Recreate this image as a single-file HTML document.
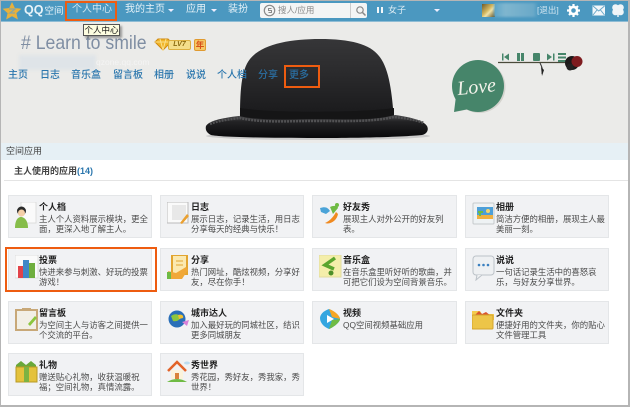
<!DOCTYPE html>
<html><head><meta charset="utf-8">
<style>
*{margin:0;padding:0;box-sizing:border-box}
html,body{width:630px;height:407px;overflow:hidden;background:#fff}
body{font-family:"Liberation Sans","Noto Sans CJK SC",sans-serif;position:relative;filter:blur(.25px)}
.a{position:absolute;white-space:nowrap}
.nav{color:#e6f2f8;font-size:10px;line-height:14px;top:3px}
.m{color:#2a76ad;font-size:10px;line-height:13px;top:69px;font-weight:500}
.card{position:absolute;width:144px;height:43px;background:#f1f2f4;border:1px solid #e4e6e8}
.card b{position:absolute;left:30px;top:5px;font-size:9px;line-height:12px;color:#222;white-space:nowrap}
.card p{position:absolute;left:30px;top:18px;width:112px;font-size:8.4px;line-height:10px;color:#4a4a4a;white-space:nowrap}
.card svg{position:absolute;left:6px;top:6px}
</style></head><body>
<div class="a" style="left:0;top:0;width:630px;height:407px;border:1px solid #b5b5b5;border-width:1px 2px 2px 1px;z-index:9;pointer-events:none"></div>

<!-- top bar -->
<div class="a" style="left:1px;top:1px;width:628px;height:20px;background:#4b98c0"></div>
<div class="a" style="left:0;top:21px;width:630px;height:1px;background:#8fbcd4"></div>
<svg class="a" style="left:2px;top:1px" width="20" height="19"><path d="M10 1l2.800 6 6.600.7-5 4.400 1.500 6.400L10 15.200l-5.900 3.300 1.500-6.400-5-4.400 6.600-.7z" fill="#e8b13c"/><path d="M7 8h6l-5 4h5" stroke="#8aa6a0" stroke-width="1.300" fill="none"/></svg>
<div class="a" style="left:24px;top:3px;color:#e8f3f8;font-size:12px;line-height:14px"><span style="font-size:12.500px;font-weight:bold">QQ</span><span style="font-size:9.500px;margin-left:1px">空间</span></div>
<div class="a nav" style="left:72px;color:#cfe5f0">个人中心</div>
<div class="a nav" style="left:125px">我的主页</div>
<div class="a" style="left:168px;top:9px;border:3px solid transparent;border-top:3px solid #eef;border-bottom:0"></div>
<div class="a nav" style="left:186px">应用</div>
<div class="a" style="left:211px;top:9px;border:3px solid transparent;border-top:3px solid #eef;border-bottom:0"></div>
<div class="a nav" style="left:228px">装扮</div>
<div class="a" style="left:260px;top:3px;width:107px;height:15px;background:#f4f5f5;border-radius:2px"></div>
<div class="a" style="left:350px;top:3px;width:1px;height:15px;background:#ccc"></div>
<svg class="a" style="left:263px;top:4px" width="13" height="13"><circle cx="6.500" cy="6.500" r="5.200" fill="none" stroke="#8a8a8a" stroke-width="1.200"/><path d="M8.500 4.500h-3l0 2h3v2h-3" stroke="#8a8a8a" fill="none"/></svg>
<div class="a" style="left:278px;top:4px;color:#8a8a8a;font-size:8.500px;line-height:13px">搜人/应用</div>
<svg class="a" style="left:355px;top:5px" width="12" height="12"><circle cx="5" cy="5" r="3.200" fill="none" stroke="#888" stroke-width="1.200"/><path d="M7.500 7.500l3 3" stroke="#888" stroke-width="1.500"/></svg>
<div class="a" style="left:377px;top:7px;width:2px;height:6px;background:#f2f7fa;box-shadow:4px 0 0 #f2f7fa"></div>
<div class="a" style="left:388px;top:4px;color:#dcecf4;font-size:9px;line-height:13px">女子</div>
<div class="a" style="left:434px;top:9px;border:3px solid transparent;border-top:3px solid #eef;border-bottom:0"></div>
<div class="a" style="left:482px;top:4px;width:13px;height:13px;background:linear-gradient(135deg,#6d5a2c,#d4b860 45%,#f0e2a8 60%,#5a4a20)"></div>
<div class="a" style="left:494px;top:3px;width:44px;height:14px;background:linear-gradient(90deg,#5da5c8,#7fb6cf 25%,#6aa9c8 90%,#4b98c0);filter:blur(1px)"></div>
<div class="a" style="left:537px;top:4px;color:#d5e8f2;font-size:8.500px;line-height:13px">[退出]</div>
<svg class="a" style="left:566px;top:3px" width="15" height="15"><circle cx="7.500" cy="7.500" r="3.600" fill="none" stroke="#fff" stroke-width="2.600"/><path d="M7.500 1v2.500M7.500 11.500V14M1 7.500h2.500M11.500 7.500H14M3 3l1.800 1.800M10.200 10.200L12 12M12 3l-1.800 1.800M4.800 10.200L3 12" stroke="#fff" stroke-width="2.200"/></svg>
<svg class="a" style="left:592px;top:5px" width="14" height="11"><rect x=".5" y=".5" width="12.500" height="10" fill="#f2f7fa"/><path d="M1 1l5.700 5L12.500 1M1 10l4-5M12.500 10l-4-5" stroke="#6aa8c8" fill="none"/></svg>
<svg class="a" style="left:611px;top:3px" width="14" height="15"><circle cx="4.500" cy="4.500" r="3.300" fill="#f0f5f8"/><circle cx="9.500" cy="4.500" r="3.300" fill="#f0f5f8"/><circle cx="4.500" cy="9" r="3.300" fill="#f0f5f8"/><circle cx="9.500" cy="9" r="3.300" fill="#f0f5f8"/><path d="M7 9v5" stroke="#f0f5f8" stroke-width="1.500"/></svg>

<!-- banner -->
<div class="a" style="left:1px;top:22px;width:628px;height:121px;background:#ebebe9"></div>
<div class="a" style="left:21px;top:31px;color:#7f8ea3;font-size:19.500px;line-height:24px;transform-origin:0 0;transform:scaleX(.905)">#&nbsp;Learn to smile</div>
<svg class="a" style="left:154px;top:38px" width="19" height="13"><path d="M1 4l3-3h10l3 3-8 8z" fill="#f0b52a" stroke="#d08a10"/><path d="M1 4h16M6 1l3 11 3-11" stroke="#fbe08a" fill="none"/></svg>
<div class="a" style="left:168px;top:40px;width:23px;height:10px;background:#f4de8a;border:1px solid #dcb040;border-radius:2px;color:#8a6a10;font-size:7px;line-height:8px;font-weight:bold;text-align:center;font-style:italic">LV7</div>
<div class="a" style="left:194px;top:39px;width:12px;height:12px;background:#f5c966;border:1px solid #e09a30;border-radius:2px;color:#d8501a;font-size:8.500px;line-height:10px;text-align:center;font-weight:bold">年</div>
<div class="a" style="left:19px;top:55px;width:77px;height:15px;background:#dfe4e8;filter:blur(1.500px)"></div>
<div class="a" style="left:96px;top:57px;color:#f4f4f4;font-size:8.500px;line-height:11px">qzone.qq.com</div>

<!-- hat -->
<svg class="a" style="left:190px;top:30px" width="260" height="113">
<defs>
<linearGradient id="c" x1="0" y1="0" x2="0" y2="1"><stop offset="0" stop-color="#363638"/><stop offset=".4" stop-color="#2b2b2d"/><stop offset="1" stop-color="#18181a"/></linearGradient>
<linearGradient id="k" x1="0" y1="0" x2="0" y2="1"><stop offset="0" stop-color="#4a4a4c"/><stop offset=".3" stop-color="#222224"/><stop offset="1" stop-color="#08080a"/></linearGradient>
</defs>
<ellipse cx="128" cy="106" rx="112" ry="4" fill="#bdbdbd" opacity=".7"/>
<path d="M50 90C50 62 51 40 60 29 72 14 100 9 130 9c30 0 50 5 59 17 10 12 13 36 15 64z" fill="url(#c)"/>
<path d="M50 78c30 5 120 5 154 0v14H50z" fill="#151516"/>
<path d="M16 96c3-5 15-8 33-10 22 5 46 3 76 3s58 2 80-4c16 2 29 6 32 11 2 4 0 8-5 9-10 1-40 3-105 3-55 0-98-1-106-3-4-2-6-5-5-9z" fill="url(#k)"/>
<path d="M20 94c10-4 22-5 30-6 22 5 46 3 76 3s56 1 78-4c12 1 22 3 30 6" fill="none" stroke="#525254" stroke-width="2.500" stroke-dasharray="2 1"/>
</svg>

<!-- menu -->
<div class="a m" style="left:8px">主页</div>
<div class="a m" style="left:40px">日志</div>
<div class="a m" style="left:71px">音乐盒</div>
<div class="a m" style="left:113px">留言板</div>
<div class="a m" style="left:154px">相册</div>
<div class="a m" style="left:186px">说说</div>
<div class="a m" style="left:217px">个人档</div>
<div class="a m" style="left:258px;color:#2a6fa3">分享</div>
<div class="a m" style="left:289px;color:#2a6fa3">更多</div>

<!-- love & rose -->
<svg class="a" style="left:448px;top:50px" width="140" height="70">
<circle cx="31.500" cy="37" r="26" fill="#d3d3ce"/>
<path d="M7 62l3-15 12 12z" fill="#d3d3ce"/>
<circle cx="30" cy="36" r="26" fill="#46856a"/>
<path d="M6 62l2-16 13 13z" fill="#46856a"/>
<text x="9" y="43" font-family="Liberation Serif,serif" font-style="italic" font-size="20" fill="#f2f2ea" transform="rotate(-6 30 36)">Love</text>
<path d="M50 12.500h68" stroke="#4a4a3a" stroke-width="1.200"/>
<path d="M92 13c2 4 3 6 2 11" stroke="#333" fill="none"/><path d="M93 17l3 3-2 6z" fill="#222"/>
<g fill="#46856a"><rect x="54" y="3.500" width="1.500" height="7"/><path d="M61 3.500v7l-5-3.500z"/><rect x="69" y="3" width="3" height="8"/><rect x="73" y="3" width="3" height="8"/><rect x="85" y="3" width="7" height="8" rx="1"/><path d="M99 3.500v7l5-3.500z"/><rect x="105" y="3.500" width="1.500" height="7"/><rect x="110" y="3" width="8" height="2"/><rect x="110" y="6.500" width="8" height="2"/><rect x="110" y="10" width="8" height="2"/></g>
<circle cx="124" cy="13" r="7" fill="#1c1a1a"/><circle cx="129" cy="11.500" r="5.500" fill="#7e1b1f"/><circle cx="122" cy="17" r="3.500" fill="#222"/>
</svg>

<!-- section -->
<div class="a" style="left:1px;top:143px;width:628px;height:17px;background:#e6f0f5"></div>
<div class="a" style="left:6px;top:145px;font-size:9px;line-height:13px;color:#444">空间应用</div>
<div class="a" style="left:14px;top:165px;font-size:9px;line-height:13px;color:#444;font-weight:bold">主人使用的应用<span style="color:#2a76ad">(14)</span></div>
<div class="a" style="left:4px;top:180px;width:624px;height:1px;background:#e4e4e4"></div>

<!-- cards -->
<div class="card" style="left:8px;top:195px"><svg width="24" height="28"><rect x="6" y="0" width="15" height="21" fill="#fafafa" stroke="#ddd"/><circle cx="6.500" cy="9" r="4.500" fill="#2b2b2b"/><circle cx="6.500" cy="11" r="3.500" fill="#f4cfa8"/><path d="M0 26c0-8 3-11 6-11s7 3 7 11z" fill="#86bd4a"/></svg><b>个人档</b><p>主人个人资料展示模块，更全<br>面，更深入地了解主人。</p></div>
<div class="card" style="left:160px;top:195px"><svg width="24" height="24"><rect x="0" y="0" width="21" height="21" fill="#fafafa" stroke="#bbb"/><rect x="5" y="3" width="14" height="15" fill="#e8e8e8"/><path d="M13 21l7-9 2 2-7 8z" fill="#eaa030"/></svg><b>日志</b><p>展示日志，记录生活，用日志<br>分享每天的经典与快乐！</p></div>
<div class="card" style="left:312px;top:195px;width:145px"><svg width="22" height="24"><path d="M1 6c6-2 8 0 10 3l-4 3-5-2z" fill="#4aa3d8"/><path d="M11 5c4-2 8-1 8 1l-5 6z" fill="#6fbb44"/><path d="M6 21c5-2 9-7 11-11l2 2c-1 6-7 11-13 9z" fill="#f08a20"/><circle cx="18" cy="3" r="2" fill="#6fbb44"/></svg><b>好友秀</b><p>展现主人对外公开的好友列<br>表。</p></div>
<div class="card" style="left:465px;top:195px"><svg width="23" height="24"><rect x="1" y="1" width="21" height="21" fill="#eef2f4" stroke="#c5c9cc" rx="1"/><rect x="5" y="5" width="16" height="12" fill="#4d9fd8"/><rect x="5" y="13" width="16" height="4" fill="#f0b040"/><circle cx="16" cy="9" r="2" fill="#f5d56a"/><path d="M8 14v-5M6 10h5" stroke="#6fbb44" stroke-width="2"/></svg><b>相册</b><p>简洁方便的相册，展现主人最<br>美丽一刻。</p></div>

<div class="card" style="left:8px;top:248px"><svg width="24" height="24"><rect x="0" y="0" width="23" height="23" fill="#fafafa" stroke="#ddd"/><rect x="3" y="11" width="6" height="12" fill="#e2434a"/><rect x="8" y="5" width="6" height="18" fill="#3f87c8"/><rect x="14" y="8" width="6" height="15" fill="#6fae3e"/></svg><b>投票</b><p>快进来参与刺激、好玩的投票<br>游戏！</p></div>
<div class="card" style="left:160px;top:248px"><svg width="24" height="26"><rect x="5" y="0" width="15" height="19" fill="#fbe9b0" stroke="#e2a530" stroke-width="2"/><path d="M9 6h7M9 10h7" stroke="#e2a530"/><path d="M1 16l8 2 10-6 2 3-6 9H3z" fill="#f0a838"/><rect x="0" y="17" width="4" height="7" fill="#6fbb44"/></svg><b>分享</b><p>热门网址，酷炫视频，分享好<br>友，尽在你手！</p></div>
<div class="card" style="left:312px;top:248px;width:145px"><svg width="23" height="24"><rect x="0" y="0" width="22" height="22" fill="#f4eeaa" stroke="#e2dca0"/><path d="M16 3L6 10l9 4" stroke="#5aa52e" stroke-width="3.500" fill="none"/><circle cx="12" cy="18" r="2.500" fill="#4d8f28"/></svg><b>音乐盒</b><p>在音乐盒里听好听的歌曲，并<br>可把它们设为空间背景音乐。</p></div>
<div class="card" style="left:465px;top:248px"><svg width="24" height="26"><rect x="1" y="1" width="21" height="19" rx="3" fill="#eef0f2" stroke="#bcc2c8"/><path d="M5 20l-1 5 6-5" fill="#eef0f2" stroke="#bcc2c8"/><circle cx="7" cy="10" r="1.300" fill="#3a80c0"/><circle cx="11.500" cy="10" r="1.300" fill="#3a80c0"/><circle cx="16" cy="10" r="1.300" fill="#3a80c0"/></svg><b>说说</b><p>一句话记录生活中的喜怒哀<br>乐，与好友分享世界。</p></div>

<div class="card" style="left:8px;top:301px"><svg width="24" height="24"><rect x="1" y="2" width="21" height="20" fill="#f2efe6" stroke="#c8a878" stroke-width="2"/><rect x="7" y="0" width="9" height="3" fill="#c8a878"/><path d="M13 16l7-8 2 2-7 8z" fill="#8cc63f"/></svg><b>留言板</b><p>为空间主人与访客之间提供一<br>个交流的平台。</p></div>
<div class="card" style="left:160px;top:301px"><svg width="24" height="22"><circle cx="10" cy="11" r="8.500" fill="#2a6fb8"/><path d="M4 8c4-3 8-2 9 1s-4 5-7 4z" fill="#8cc63f"/><path d="M11 7c3-1 6 0 5 3l-4 1z" fill="#f0c030"/><path d="M15 14l7-2-2 6z" fill="#d880d8"/></svg><b>城市达人</b><p>加入最好玩的同城社区，结识<br>更多同城朋友</p></div>
<div class="card" style="left:312px;top:301px;width:145px"><svg width="22" height="22"><path d="M10 1C4 3 1 7 1 10c0 5 4 9 9 11 5-2 11-7 11-10S15 3 10 1z" fill="#34a6e0"/><path d="M10 1c6 2 11 7 11 10l-8-2z" fill="#f5a623"/><path d="M10 21c5-2 11-7 11-10l-8 1z" fill="#6fbb44"/><path d="M8 7l7 4-7 4z" fill="#fff"/></svg><b>视频</b><p>QQ空间视频基础应用</p></div>
<div class="card" style="left:465px;top:301px"><svg width="23" height="23"><path d="M0 3h8l2 3h12v6H0z" fill="#f4cb4d"/><path d="M3 7l4-4 3 3 4-2 5 4z" fill="#d9552e"/><rect x="0" y="7" width="21" height="14" rx="1" fill="#edc548" stroke="#d3a42c"/></svg><b>文件夹</b><p>便捷好用的文件夹，你的贴心<br>文件管理工具</p></div>

<div class="card" style="left:8px;top:353px"><svg width="24" height="24"><path d="M1 5l5-4 5 4 5-4 5 4v3H1z" fill="#69a83a"/><rect x="1" y="7" width="21" height="15" fill="#e4c23c" stroke="#b89a24"/><rect x="9" y="7" width="5" height="15" fill="#7cb342"/></svg><b>礼物</b><p>赠送贴心礼物，收获温暖祝<br>福；空间礼物，真情流露。</p></div>
<div class="card" style="left:160px;top:353px"><svg width="24" height="23"><path d="M1 11L10 2l9 9" stroke="#e2632a" stroke-width="2.500" fill="none"/><rect x="4" y="10" width="12" height="9" fill="#fbf3dc"/><rect x="8" y="13" width="4" height="6" fill="#d9823a"/><path d="M0 22c6-4 14-4 20 0z" fill="#6fbb44"/><ellipse cx="20" cy="3" rx="3" ry="1.500" fill="#bcdcf0"/></svg><b>秀世界</b><p>秀花园，秀好友，秀我家，秀<br>世界！</p></div>

<!-- highlights -->
<div class="a" style="left:65px;top:1px;width:52px;height:20px;border:2px solid #ee5c10;z-index:5"></div>
<div class="a" style="left:284px;top:65px;width:36px;height:23px;border:2px solid #ee5c10;z-index:5"></div>
<div class="a" style="left:5px;top:247px;width:152px;height:45px;border:2px solid #ee5c10;z-index:5"></div>
<!-- tooltip -->
<div class="a" style="left:83px;top:24px;width:37px;height:12px;background:#fdfde0;border:1px solid #555;box-shadow:2px 2px 2px rgba(0,0,0,.35);font-size:8.500px;line-height:10px;color:#111;text-align:center;z-index:6">个人中心</div>
</body></html>
